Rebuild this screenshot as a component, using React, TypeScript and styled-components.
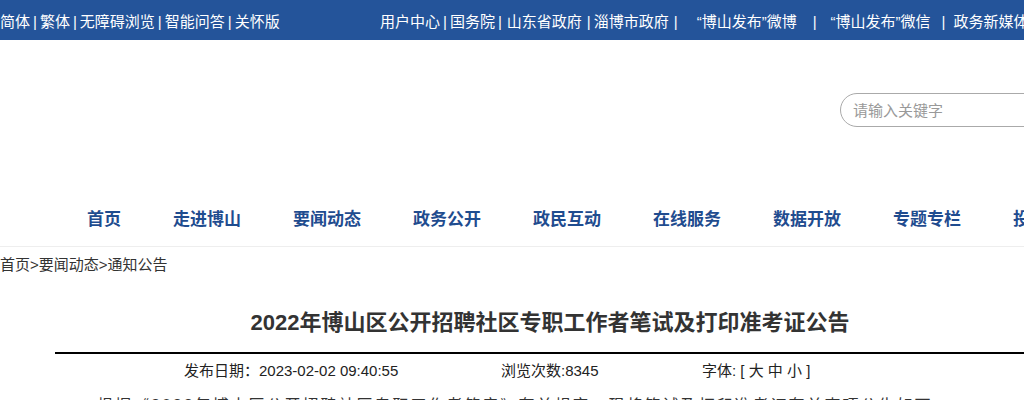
import React from "react";
import styled, { createGlobalStyle } from "styled-components";

const GlobalStyle = createGlobalStyle`
    html, body {
        margin: 0;
        padding: 0;
        background: #fff;
        overflow-x: hidden;
    }
    body {
        font-family: "Liberation Sans", "Noto Sans CJK SC", sans-serif;
        color: #333;
    }
`;

const Page = styled.div`
    width: 1100px;
`;

const TopBar = styled.div`
    display: flex;
    align-items: center;
    height: 40px;
    background-color: #24549a;
    color: #fff;
    font-size: 15px;
    white-space: pre;
`;

const TopLeft = styled.div`
    width: 380px;
    flex-shrink: 0;
`;

const TopRight = styled.div`
    flex-shrink: 0;
`;

const Sep = styled.span<{ left?: number; right?: number }>`
    margin-left: ${({ left }) => (left ?? 3)}px;
    margin-right: ${({ right }) => (right ?? 3)}px;
`;

const Header = styled.div`
    display: flex;
    align-items: flex-start;
    height: 150px;
    padding-left: 840px;
    box-sizing: border-box;
`;

const SearchBox = styled.div`
    margin-top: 53px;
    width: 240px;
    height: 34px;
    box-sizing: border-box;
    border: 1px solid #aaa;
    border-radius: 17px;
    display: flex;
    align-items: center;
    padding-left: 12px;
    padding-bottom: 2px;
    color: #999;
    font-size: 15px;
`;

const Nav = styled.div`
    display: flex;
    align-items: center;
    height: 56px;
    padding-left: 61px;
    border-bottom: 1px solid #eee;
    white-space: nowrap;
`;

const NavItem = styled.a`
    padding: 0 26px;
    font-size: 17px;
    font-weight: bold;
    color: #1f4c8f;
    text-decoration: none;
    margin-top: -2px;
`;

const Crumbs = styled.div`
    padding-top: 10px;
    height: 22px;
    font-size: 15px;
    line-height: 16px;
    color: #333;
`;

const Title = styled.h1`
    margin: 0;
    padding-top: 30px;
    padding-bottom: 15px;
    font-size: 22px;
    line-height: 28px;
    font-weight: bold;
    color: #333;
    text-align: center;
`;

const Article = styled.div`
    margin: 0 55px;
`;

const Rule = styled.div`
    height: 2px;
    background: #000;
`;

const Meta = styled.div`
    display: grid;
    grid-template-columns: 317px 201px auto;
    padding-left: 129px;
    height: 30px;
    align-items: center;
    font-size: 15px;
    color: #222;
    white-space: pre;
`;

const Body = styled.p`
    margin: 0;
    padding: 7px 10px 0;
    text-indent: 2em;
    font-size: 16px;
    line-height: 30px;
    letter-spacing: 2px;
    color: #333;
`;

const navItems = ["首页", "走进博山", "要闻动态", "政务公开", "政民互动", "在线服务", "数据开放", "专题专栏", "投诉举报"];
const leftLinks = ["简体", "繁体", "无障碍浏览", "智能问答", "关怀版"];

export default function App() {
    return (
        <Page>
            <GlobalStyle />
            <TopBar>
                <TopLeft>
                    {leftLinks.map((link, index) => (
                        <React.Fragment key={link}>
                            {index > 0 && <Sep>|</Sep>}
                            {link}
                        </React.Fragment>
                    ))}
                </TopLeft>
                <TopRight>
                    用户中心<Sep>|</Sep>国务院<Sep right={5}>|</Sep>山东省政府<Sep left={5} right={3}>|</Sep>淄博市政府<Sep left={5} right={5}>|</Sep>
                    <Sep left={14} right={6}>“博山发布”微博</Sep><Sep left={10} right={8}>|</Sep><Sep left={6} right={6}>“博山发布”微信</Sep><Sep left={5} right={8}>|</Sep>政务新媒体
                </TopRight>
            </TopBar>
            <Header>
                <SearchBox>请输入关键字</SearchBox>
            </Header>
            <Nav>
                {navItems.map((item) => (
                    <NavItem key={item} href="#">{item}</NavItem>
                ))}
            </Nav>
            <Crumbs>首页&gt;要闻动态&gt;通知公告</Crumbs>
            <Title>2022年博山区公开招聘社区专职工作者笔试及打印准考证公告</Title>
            <Article>
                <Rule />
                <Meta>
                    <span>发布日期：2023-02-02 09:40:55</span>
                    <span>浏览次数:8345</span>
                    <span>字体: [ 大 中 小 ]</span>
                </Meta>
                <Body>
                    根据《2022年博山区公开招聘社区专职工作者简章》有关规定，现将笔试及打印准考证有关事项公告如下：
                </Body>
            </Article>
        </Page>
    );
}
